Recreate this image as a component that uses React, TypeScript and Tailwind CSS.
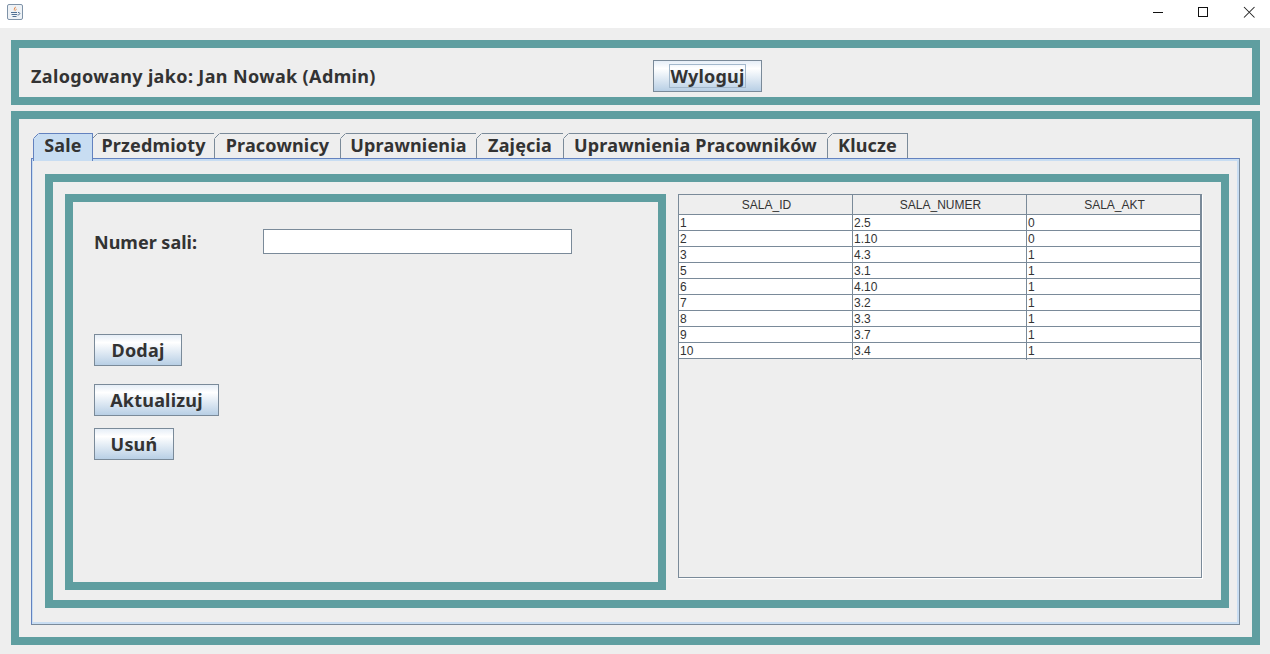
const DJ = "font-['Noto_Sans',sans-serif] font-bold text-[#333333]";

function Corner({ color }: { color: string }) {
  return (
    <svg className="absolute -left-px -top-px" width="6" height="6" viewBox="0 0 6 6">
      <path d="M0 0H6V0.5L0.5 6H0Z" fill="#eeeeee" />
      <path d="M0.5 5.5L5.5 0.5" stroke={color} strokeWidth="1" />
    </svg>
  );
}

function Tab({ label, width, active }: { label: string; width: string; active?: boolean }) {
  return (
    <div
      className={
        active
          ? `relative ${width} h-[28px] -mb-[3px] z-10 flex items-start justify-center whitespace-nowrap bg-[#c8ddf2] border-t border-l border-r border-[#6382bf] text-[18px] leading-[22px] tracking-[0.17px] ${DJ}`
          : `relative ${width} h-[25px] flex items-start justify-center whitespace-nowrap border-t border-r border-[#7a8a99] text-[18px] leading-[22px] tracking-[0.17px] ${DJ}`
      }
    >
      <Corner color={active ? "#6382bf" : "#7a8a99"} />
      {label}
    </div>
  );
}

function MetalButton({ label, width, className }: { label: string; width: string; className?: string }) {
  return (
    <button
      className={`${width} h-[32px] flex items-center justify-center border border-[#7a8a99] bg-gradient-to-b from-[#e6eef7] via-[#ffffff] via-[25%] to-[#b8cfe5] text-[18px] tracking-[0.2px] ${DJ} ${className ?? ""}`}
    >
      {label}
    </button>
  );
}

const rows = [
  ["1", "2.5", "0"],
  ["2", "1.10", "0"],
  ["3", "4.3", "1"],
  ["5", "3.1", "1"],
  ["6", "4.10", "1"],
  ["7", "3.2", "1"],
  ["8", "3.3", "1"],
  ["9", "3.7", "1"],
  ["10", "3.4", "1"],
];

export default function App() {
  return (
    <div className="w-[1270px] h-[654px] bg-[#eeeeee] flex flex-col overflow-hidden">
      {/* title bar */}
      <div className="h-[28px] bg-white flex items-start shrink-0">
        <svg className="ml-[7px] mt-[4px]" width="16" height="16" viewBox="0 0 16 16">
          <rect x="0.5" y="0.5" width="15" height="15" rx="1.5" fill="#eef2f6" stroke="#7f93a8" />
          <path d="M8.5 2.5C9.5 4 6.5 5 7.5 7.5C6 6 7 4 8.5 2.5Z" fill="#e2762a" />
          <path d="M9.5 4.5C10 5.5 8.5 6 9 7.5C8 6.5 8.5 5.5 9.5 4.5Z" fill="#e2762a" />
          <path d="M4 8.5H10M4.5 10.5H10M5.5 12.5H9.5" stroke="#4f6f92" strokeWidth="1" />
          <path d="M11 8.5C13.5 8 13.5 11 10.5 11" stroke="#4f6f92" strokeWidth="1" fill="none" />
        </svg>
        <div className="ml-auto flex items-start">
          <svg width="46" height="28" viewBox="0 0 46 28"><path d="M0 12.5H10" transform="translate(23 0)" stroke="#111" /></svg>
          <svg className="mr-[20px]" width="46" height="28" viewBox="0 0 46 28"><rect x="22.5" y="7.5" width="9" height="9" fill="none" stroke="#111" /></svg>
          <svg className="mr-[7px]" width="21" height="28" viewBox="0 0 21 28"><path d="M2 7L12.5 17.5M12.5 7L2 17.5" stroke="#222" strokeWidth="1.05" /></svg>
        </div>
      </div>

      {/* user panel */}
      <div className="mt-[12px] ml-[11px] w-[1249px] h-[65px] border-[8px] border-[#5f9ea0] flex items-center pt-[8px] shrink-0">
        <span className={`ml-[12px] w-[622px] text-[18px] leading-[22px] pb-[2px] tracking-[0.36px] ${DJ}`}>Zalogowany jako: Jan Nowak (Admin)</span>
        <button className={`w-[109px] h-[32px] -mt-[2px] flex items-center justify-center border border-[#7a8a99] bg-gradient-to-b from-[#e6eef7] via-[#ffffff] via-[25%] to-[#b8cfe5] text-[18px] tracking-[0.2px] ${DJ}`}>
          <span className="w-[77px] h-[24px] leading-[22px] text-center border border-[#a3b8cc]">Wyloguj</span>
        </button>
      </div>

      {/* main panel */}
      <div className="mt-[6px] ml-[11px] w-[1249px] h-[534px] border-[8px] border-[#5f9ea0] pl-[12px] pt-[14px] shrink-0">
        {/* tabs */}
        <div className="flex pl-[2px] relative">
          <Tab label="Sale" width="w-[60px]" active />
          <Tab label="Przedmioty" width="w-[122px]" />
          <Tab label="Pracownicy" width="w-[126px]" />
          <Tab label="Uprawnienia" width="w-[136px]" />
          <Tab label="Zajęcia" width="w-[87px]" />
          <Tab label="Uprawnienia Pracowników" width="w-[264px]" />
          <Tab label="Klucze" width="w-[80px]" />
        </div>
        {/* tab content */}
        <div className="w-[1209px] h-[467px] border border-[#6382bf] border-r-[#7a8a99] border-b-[#7a8a99]">
          <div className="w-full h-full border-t-[2px] border-r-[2px] border-b-[2px] border-l border-[#c8ddf2] pl-[12px] pt-[13px]">
            <div className="w-[1184px] h-[434px] border-[8px] border-[#5f9ea0] pl-[12px] pt-[12px] flex items-start">
              {/* form */}
              <div className="w-[601px] h-[396px] border-[8px] border-[#5f9ea0] pl-[21px] pt-[24px] shrink-0">
                <div className="flex items-center h-[32px]">
                  <span className={`w-[169px] text-[18px] ${DJ}`}>Numer sali:</span>
                  <div className="w-[309px] h-[25px] -mt-[1px] bg-white border border-[#7a8a99]" />
                </div>
                <MetalButton label="Dodaj" width="w-[88px]" className="mt-[76px]" />
                <MetalButton label="Aktualizuj" width="w-[125px]" className="mt-[18px]" />
                <MetalButton label="Usuń" width="w-[80px]" className="mt-[12px]" />
              </div>
              {/* table */}
              <div className="ml-[12px] w-[524px] h-[384px] border border-[#7a8a99] shadow-[1px_1px_0_#ffffff] font-['Liberation_Sans',sans-serif] text-[12px] text-[#333333]">
                <div className="grid grid-cols-[174px_174px_174px] h-[20px] border-b border-[#7a8a99]">
                  <div className="text-center pl-[2px] leading-[21px] border-r border-[#7a8a99]">SALA_ID</div>
                  <div className="text-center pl-[2px] leading-[21px] border-r border-[#7a8a99]">SALA_NUMER</div>
                  <div className="text-center pl-[2px] leading-[21px] border-r border-[#7a8a99]">SALA_AKT</div>
                </div>
                {rows.map((r) => (
                  <div key={r[0]} className="grid grid-cols-[174px_174px_174px] h-[16px] bg-white border-b border-[#7a8a99] w-[522px]">
                    {r.map((c, i) => (
                      <div key={i} className="pl-[1px] leading-[17px] border-r border-[#7a8a99]">{c}</div>
                    ))}
                  </div>
                ))}
              </div>
            </div>
          </div>
        </div>
      </div>
    </div>
  );
}
